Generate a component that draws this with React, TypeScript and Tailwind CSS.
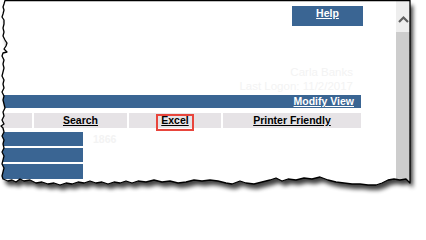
import React from "react";

// torn paper outline, clockwise from the top-left corner
const paperPoints: [number, number][] = [
  [5, 0.5], [410, 0.5], [410, 183],
  [406, 179], [400, 180], [394, 179], [388, 180], [382, 183], [376, 185], [368, 185],
  [360, 184], [352, 184], [344, 183], [336, 182], [328, 180], [320, 177], [312, 179],
  [304, 178], [296, 180], [288, 179], [282, 181], [276, 178], [270, 180], [262, 182],
  [254, 184], [246, 183], [240, 181], [232, 184], [226, 183], [218, 181], [210, 180],
  [202, 181], [194, 180], [186, 182], [178, 183], [170, 181], [162, 182], [154, 180],
  [146, 182], [138, 181], [132, 183], [126, 181], [120, 183], [114, 182], [108, 184],
  [102, 182], [96, 183], [90, 181], [84, 183], [78, 182], [72, 184], [66, 183],
  [60, 185], [54, 183], [48, 184], [42, 182], [36, 183], [30, 180], [24, 181],
  [20, 179], [16, 182], [12, 180], [8, 181], [3, 179],
  [2, 176], [3, 172], [4, 168], [2, 164], [3, 160], [4, 156], [2, 152], [4, 148],
  [3, 144], [4, 140], [2, 136], [4, 132], [3, 128], [1, 126], [4, 124], [2, 120],
  [4, 116], [3, 112], [5, 108], [4, 104], [3, 100], [4, 96], [2, 92], [4, 88],
  [3, 84], [4, 80], [2, 76], [3, 72], [4, 68], [3, 64], [4, 60], [2, 56], [3, 53],
  [7, 52], [4, 49], [6, 46], [7, 43], [5, 40], [3, 36], [4, 32], [3, 28], [4, 24],
  [4, 20], [2, 17], [3, 14], [4, 10], [3, 7], [4, 4],
];

const paperPath = "M" + paperPoints.map(([x, y]) => `${x} ${y}`).join(" L") + " Z";
const outsidePath = "M0 0 H426 V202 H0 Z " + paperPath;

function TornFrame() {
  return (
    <svg className="absolute inset-0 z-10 pointer-events-none" width="426" height="202" viewBox="0 0 426 202">
      <defs>
        <filter id="blur" x="-10%" y="-10%" width="120%" height="130%">
          <feGaussianBlur stdDeviation="2.2" />
        </filter>
        <clipPath id="outside">
          <path d={outsidePath} clipRule="evenodd" />
        </clipPath>
      </defs>
      <path d={outsidePath} fill="#fff" fillRule="evenodd" />
      <g clipPath="url(#outside)">
        <path d={paperPath} transform="translate(3 5)" fill="#000" opacity="0.75" filter="url(#blur)" />
      </g>
      <path d={paperPath} fill="none" stroke="#000" strokeWidth="1.3" strokeLinejoin="round" />
    </svg>
  );
}

const tabs = [
  { label: "", width: "w-[32px]" },
  { label: "Search", width: "w-[93px]" },
  { label: "Excel", width: "w-[92px]", marked: true },
  { label: "Printer Friendly", width: "w-[138px]" },
];

export default function App() {
  return (
    <div className="relative w-[426px] h-[202px] overflow-hidden bg-white font-['Liberation_Sans',Arial,sans-serif]">
      <div className="flex h-full">
        <main className="w-[396px] flex flex-col">
          <div className="flex justify-end pt-[6px] pr-[33px]">
            <div className="w-[71px] h-[20px] bg-[#3a6593] text-center pt-[1px] text-[10.5px] leading-[12px]">
              <a className="text-white font-bold underline">Help</a>
            </div>
          </div>

          <div className="mt-[39px] w-[361px] pr-[8px] text-right text-[11.5px] leading-[14px] text-[#f3f3f3]">
            <div>Carla Banks</div>
            <div>Last Logon: 11/2/2017</div>
          </div>

          <div className="mt-[2px] w-[361px] h-[13px] bg-[#3a6593] text-right pr-[7px] text-[10.5px] leading-[13px]">
            <a className="text-white font-bold underline">Modify View</a>
          </div>

          <div className="mt-[5px] w-[361px] h-[15px] flex gap-[2px]">
            {tabs.map((tab, i) => (
              <div
                key={i}
                className={`relative ${tab.width} h-full bg-[#e6e3e6] text-center text-black font-bold text-[10.5px] leading-[15px]`}
              >
                {tab.label && <a className="underline">{tab.label}</a>}
                {tab.marked && (
                  <span className="absolute left-[27px] top-[1px] w-[38px] h-[17px] border-2 border-[#e8453c]" />
                )}
              </div>
            ))}
          </div>

          <div className="mt-[4px] flex flex-col gap-[2px]">
            <div className="flex items-center">
              <div className="w-[83px] h-[14px] bg-[#3a6593]" />
              <span className="ml-[10px] text-[10.5px] leading-[14px] font-bold text-[#f3f3f3]">1866</span>
            </div>
            <div className="w-[83px] h-[14px] bg-[#3a6593]" />
            <div className="w-[83px] h-[15px] bg-[#3a6593]" />
          </div>
        </main>

        <div className="w-[14px] flex flex-col">
          <div className="h-[32px] bg-[#eeeeee] flex justify-center pt-[15px]">
            <svg width="11" height="8" viewBox="0 0 11 8">
              <path d="M1 7 L5.5 2.5 L10 7" fill="none" stroke="#606060" strokeWidth="2.2" />
            </svg>
          </div>
          <div className="flex-1 bg-[#cdcdcd]" />
        </div>
      </div>
      <TornFrame />
    </div>
  );
}
